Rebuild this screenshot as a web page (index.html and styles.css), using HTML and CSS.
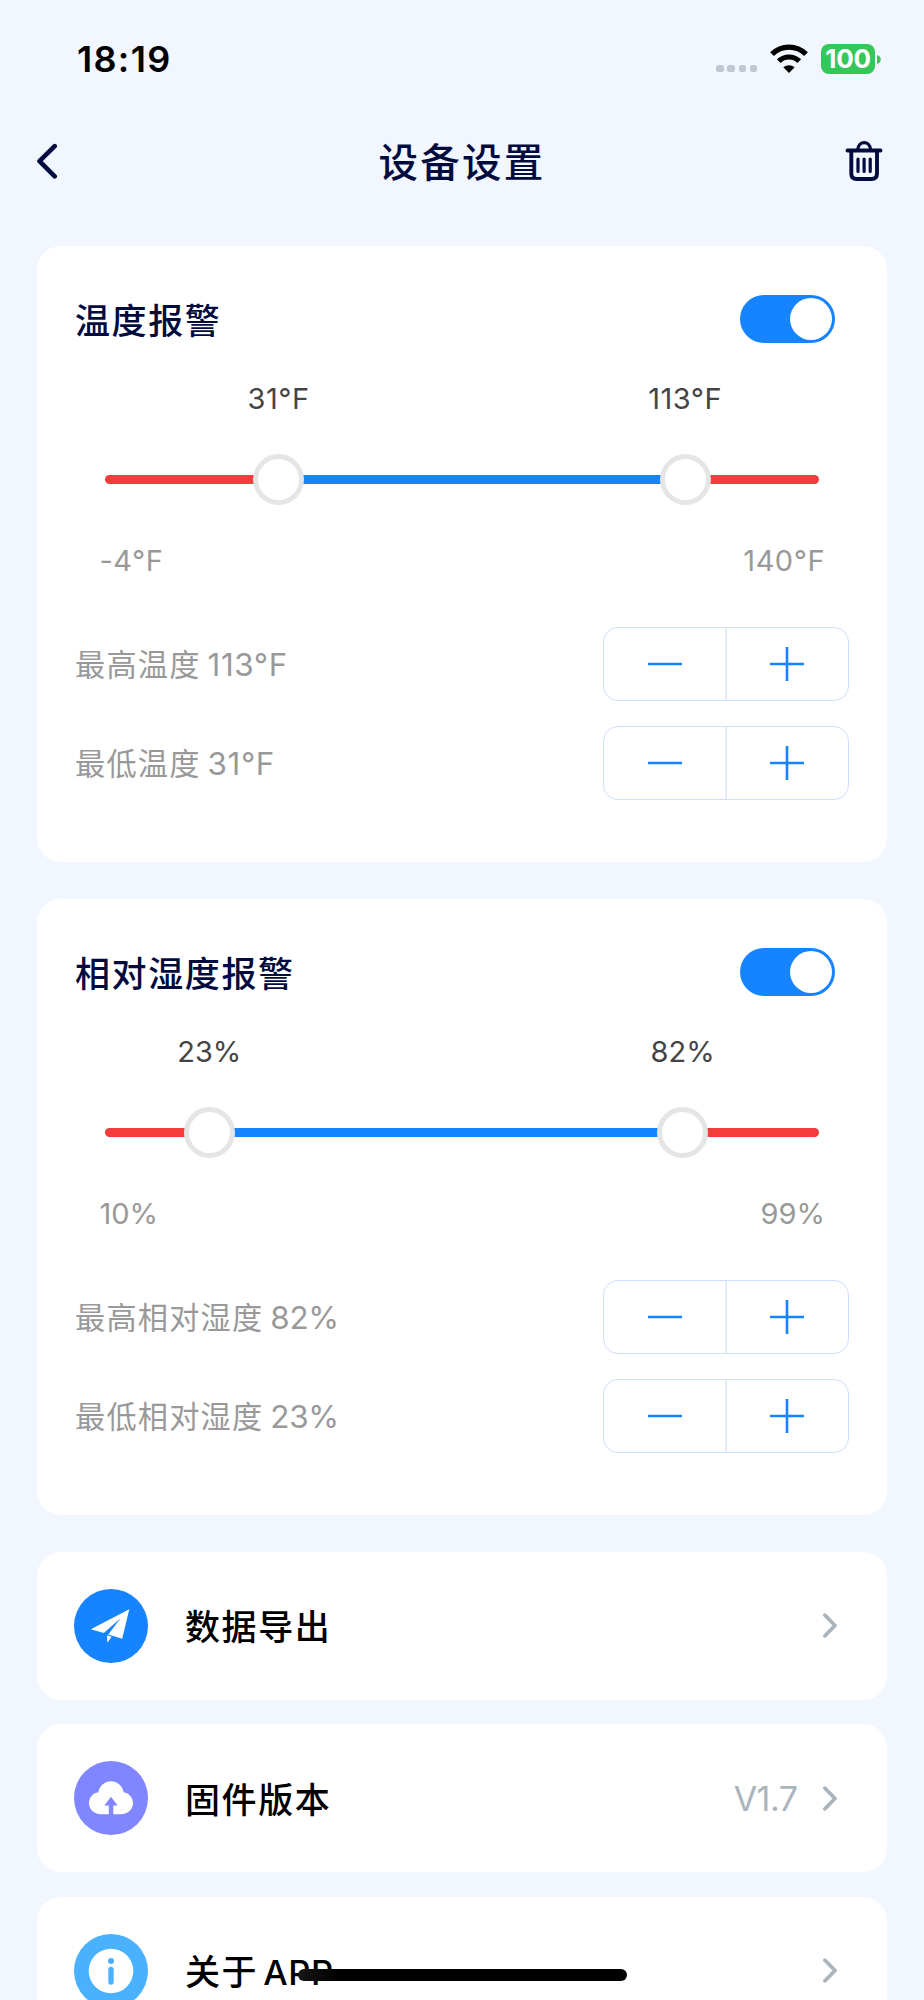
FILE: index.html
```html
<!DOCTYPE html>
<html lang="zh-CN">
<head>
<meta charset="utf-8">
<meta name="viewport" content="width=device-width">
<title>设备设置</title>
<link rel="stylesheet" href="styles.css">
</head>
<body>
<div class="screen">
  <div class="status-bar">
    <span class="clock">18:19</span>
    <div class="status-icons">
      <div class="signal"><i></i><i></i><i></i><i></i></div>
      <svg class="wifi" width="38" height="30" viewBox="0 0 38 30">
        <path d="M2 10.2C11.5 0.8 26.500 .8 36 10.200" fill="none" stroke="#000" stroke-width="5.400"/>
        <path d="M8.700 17.200C14.500 11.600 23.500 11.600 29.300 17.200" fill="none" stroke="#000" stroke-width="5.200"/>
        <path d="M19 29l-5.700-5.700c3.300-2.900 8.100-2.900 11.400 0z"/>
      </svg>
      <div class="battery"><span class="battery-level">100</span></div>
      <svg class="battery-cap" width="4" height="9" viewBox="0 0 4 9"><path d="M0 0C5 1.500 5 7.500 0 9z" fill="#34c759"/></svg>
    </div>
  </div>

  <header class="nav">
    <svg class="nav-icon" width="40" height="40" viewBox="0 0 40 40" fill="none" stroke="#020b3d" stroke-width="4.600" stroke-linecap="round" stroke-linejoin="round"><path d="M17.700 5.200L2.500 20.200L17.700 35.400"/></svg>
    <h1 class="nav-title">设备设置</h1>
    <svg class="nav-icon" width="40" height="40" viewBox="0 0 40 40" fill="none" stroke="#020b3d" stroke-linecap="round" stroke-linejoin="round">
      <path d="M2.500 9.500H35.500M6.300 10V32.500q0 5.500 5.500 5.500H26.500q5.500 0 5.500-5.500V10" stroke-width="3.900"/>
      <path d="M12.700 9C13.500 -.8 24.800 -.8 25.700 9" stroke-width="3.200"/>
      <path d="M13 18V30.500M19.100 18V30.500M25.200 18V30.500" stroke-width="3.200"/>
    </svg>
  </header>

  <main class="content">
    <section class="card">
      <div class="card-head"><h2 class="card-title">温度报警</h2><div class="toggle"><i class="knob"></i></div></div>
      <div class="range range-temp">
        <div class="range-values">
          <span class="range-value" style="left:24.3%">31°F</span>
          <span class="range-value" style="left:81.25%">113°F</span>
        </div>
        <div class="track">
          <div class="track-fill" style="left:24.3%;right:18.75%"></div>
          <i class="thumb" style="left:24.3%"></i>
          <i class="thumb" style="left:81.25%"></i>
        </div>
        <div class="range-limits"><span>-4°F</span><span>140°F</span></div>
      </div>
      <div class="setting"><span class="setting-label">最高温度<b class="temp">113°F</b></span>
        <div class="stepper"><svg class="step" viewBox="0 0 34 34"><path d="M0 17H34"/></svg><svg class="step" viewBox="0 0 34 34"><path d="M0 17H34M17 0V34"/></svg></div></div>
      <div class="setting"><span class="setting-label">最低温度<b class="temp">31°F</b></span>
        <div class="stepper"><svg class="step" viewBox="0 0 34 34"><path d="M0 17H34"/></svg><svg class="step" viewBox="0 0 34 34"><path d="M0 17H34M17 0V34"/></svg></div></div>
    </section>

    <section class="card">
      <div class="card-head"><h2 class="card-title">相对湿度报警</h2><div class="toggle"><i class="knob"></i></div></div>
      <div class="range">
        <div class="range-values">
          <span class="range-value" style="left:14.6%">23%</span>
          <span class="range-value" style="left:80.9%">82%</span>
        </div>
        <div class="track">
          <div class="track-fill" style="left:14.6%;right:19.1%"></div>
          <i class="thumb" style="left:14.6%"></i>
          <i class="thumb" style="left:80.9%"></i>
        </div>
        <div class="range-limits"><span>10%</span><span>99%</span></div>
      </div>
      <div class="setting"><span class="setting-label">最高相对湿度<b>82%</b></span>
        <div class="stepper"><svg class="step" viewBox="0 0 34 34"><path d="M0 17H34"/></svg><svg class="step" viewBox="0 0 34 34"><path d="M0 17H34M17 0V34"/></svg></div></div>
      <div class="setting"><span class="setting-label">最低相对湿度<b>23%</b></span>
        <div class="stepper"><svg class="step" viewBox="0 0 34 34"><path d="M0 17H34"/></svg><svg class="step" viewBox="0 0 34 34"><path d="M0 17H34M17 0V34"/></svg></div></div>
    </section>

    <nav class="links">
      <div class="link">
        <svg class="link-icon" viewBox="0 0 74 74"><circle cx="37" cy="37" r="37" fill="#1684ff"/><path d="M55.300 20.300L16.800 40.200L29.800 44L46.500 29.200L34.300 45.500L48.200 49.800zM33 46.200L37.600 47.800L33.300 53.800z" fill="#fff"/></svg>
        <span class="link-label">数据导出</span>
        <svg class="chevron" viewBox="0 0 14 25"><path d="M2 2.200L12 12.500L2 22.800"/></svg>
      </div>
      <div class="link">
        <svg class="link-icon" viewBox="0 0 74 74"><circle cx="37" cy="37" r="37" fill="#7f86ff"/><path d="M27 53.200C20 53.200 15 48.300 15 42C15 36.500 18.800 32 24.300 31.200C25.800 24.500 31 20.300 37 20.300C43 20.300 48.200 24.500 49.700 31.200C55 32 59 36.500 59 42C59 48.300 54 53.200 47 53.200H39.300V44.500H43.600L37 35.700L30.400 44.500H34.800V53.200z" fill="#fff"/></svg>
        <span class="link-label">固件版本</span>
        <span class="link-value">V1.7</span>
        <svg class="chevron" viewBox="0 0 14 25"><path d="M2 2.200L12 12.500L2 22.800"/></svg>
      </div>
      <div class="link">
        <svg class="link-icon" viewBox="0 0 74 74"><circle cx="37" cy="37" r="37" fill="#4ab1ff"/><circle cx="37" cy="37" r="22.300" fill="#fff"/><circle cx="37" cy="27" r="3" fill="#4ab1ff"/><path d="M37 35.500V48" stroke="#4ab1ff" stroke-width="5.400" stroke-linecap="round"/></svg>
        <span class="link-label">关于<span class="latin">APP</span></span>
        <svg class="chevron" viewBox="0 0 14 25"><path d="M2 2.200L12 12.500L2 22.800"/></svg>
      </div>
    </nav>
  </main>
  <div class="home-indicator"></div>
</div>
</body>
</html>
```

FILE: styles.css
```css
* { box-sizing: border-box; margin: 0; padding: 0; }

html, body { height: 100%; overflow: hidden; }

body {
  background: #f1f6ff;
  font-family: Inter, "Noto Sans CJK SC", sans-serif;
  color: #020b3d;
}

i { display: block; }
svg { display: block; flex: none; }

.screen { position: relative; width: 924px; height: 2000px; overflow: hidden; }

/* status bar */
.status-bar {
  display: flex;
  justify-content: space-between;
  align-items: center;
  height: 118px;
  padding: 0 43px 0 77px;
}
.clock { color: #000; font-size: 36px; font-weight: 600; letter-spacing: 1.300px; }
.status-icons { display: flex; align-items: center; }
.signal { display: flex; gap: 3.700px; margin: 19px 13px 0 0; }
.signal i { width: 7.400px; height: 7.400px; border-radius: 2.500px; background: #c2c6d0; }
.wifi { margin-right: 13px; }
.battery {
  display: flex;
  align-items: center;
  justify-content: center;
  width: 54px;
  height: 30px;
  border-radius: 8px;
  background: #34c759;
}
.battery-level { color: #fff; font-size: 26px; line-height: 30px; font-weight: 700; letter-spacing: -0.200px; }
.battery-cap { margin-left: 2px; }

/* navigation */
.nav {
  display: flex;
  justify-content: space-between;
  align-items: center;
  height: 86px;
  padding: 0 39px 0 37px;
}
.nav-title { padding: 4px 0 0 2px; font-size: 39.500px; line-height: 60px; font-weight: 500; letter-spacing: 2.300px; }

.content { display: flex; flex-direction: column; gap: 37px; padding: 42px 37px 0; }

/* alarm cards */
.card { height: 616px; padding: 37px; border-radius: 24px; background: #fff; }
.card-head { display: flex; justify-content: space-between; align-items: center; height: 72px; padding-right: 15px; }
.card-title { padding: 4px 0 0 1px; font-size: 35px; line-height: 50px; font-weight: 500; letter-spacing: 1.600px; }

.toggle { display: flex; justify-content: flex-end; align-items: center; width: 95px; height: 48px; padding: 3px; border-radius: 24px; background: #1684ff; }
.knob { width: 42px; height: 42px; border-radius: 50%; background: #fff; }

.range { height: 272px; padding: 0 31px; }
.range-temp { letter-spacing: 0.500px; }
.range-values { position: relative; height: 88px; color: #444; font-size: 29px; line-height: 88px; }
.range-value { position: absolute; transform: translateX(-50%); }
.track { position: relative; height: 9px; margin-top: 32px; border-radius: 4.500px; background: #f43c3c; }
.track-fill { position: absolute; top: 0; bottom: 0; background: #1684ff; }
.thumb {
  position: absolute;
  top: -21px;
  width: 51px;
  height: 51px;
  margin-left: -25.500px;
  border: 5px solid #e5e5e5;
  border-radius: 50%;
  background: #fff;
}
.range-limits { display: flex; justify-content: space-between; margin: 59px -6px 0 -5.500px; color: #999; font-size: 29px; line-height: 36px; }

.setting { display: flex; justify-content: space-between; align-items: center; height: 74px; margin-bottom: 25px; }
.setting-label { display: flex; align-items: baseline; padding: 2px 0 0 1px; color: #999; font-size: 30.200px; line-height: 44px; letter-spacing: 1.200px; }
.setting-label b { margin-left: 7px; font-size: 31.400px; font-weight: 400; letter-spacing: -0.300px; }
.setting-label .temp { letter-spacing: 0.600px; }

.stepper {
  display: grid;
  grid-template-columns: 1fr 1fr;
  width: 246px;
  height: 74px;
  margin-right: 1px;
  border: 1px solid #cfdeff;
  border-radius: 15px;
  background: linear-gradient(#e3ecff, #e3ecff) center / 2px 100% no-repeat;
}
.step { place-self: center; width: 34px; height: 34px; stroke: #1684ff; stroke-width: 2.600; }

/* links */
.links { display: flex; flex-direction: column; gap: 24.600px; }
.link { display: flex; align-items: center; height: 147.800px; padding: 0 50px 0 37px; border-radius: 24px; background: #fff; }
.link-icon { width: 74px; height: 74px; }
.link-label { display: flex; align-items: baseline; flex: 1; margin-left: 37px; padding-top: 3px; color: #000; font-size: 35px; line-height: 50px; font-weight: 500; letter-spacing: 1.600px; }
.latin { margin-left: 5px; font-size: 34.500px; letter-spacing: 0.600px; }
.link-value { margin-right: 25.500px; padding-top: 1px; color: #aab4bd; font-size: 34px; font-weight: 400; letter-spacing: -0.500px; }
.chevron { width: 14px; height: 25px; fill: none; stroke: #aab4bd; stroke-width: 3.800; stroke-linecap: round; stroke-linejoin: round; }

.home-indicator {
  position: absolute;
  left: 298px;
  top: 1969px;
  width: 329px;
  height: 12px;
  border-radius: 6px;
  background: linear-gradient(90deg, #161616, #000 12%);
}
```
